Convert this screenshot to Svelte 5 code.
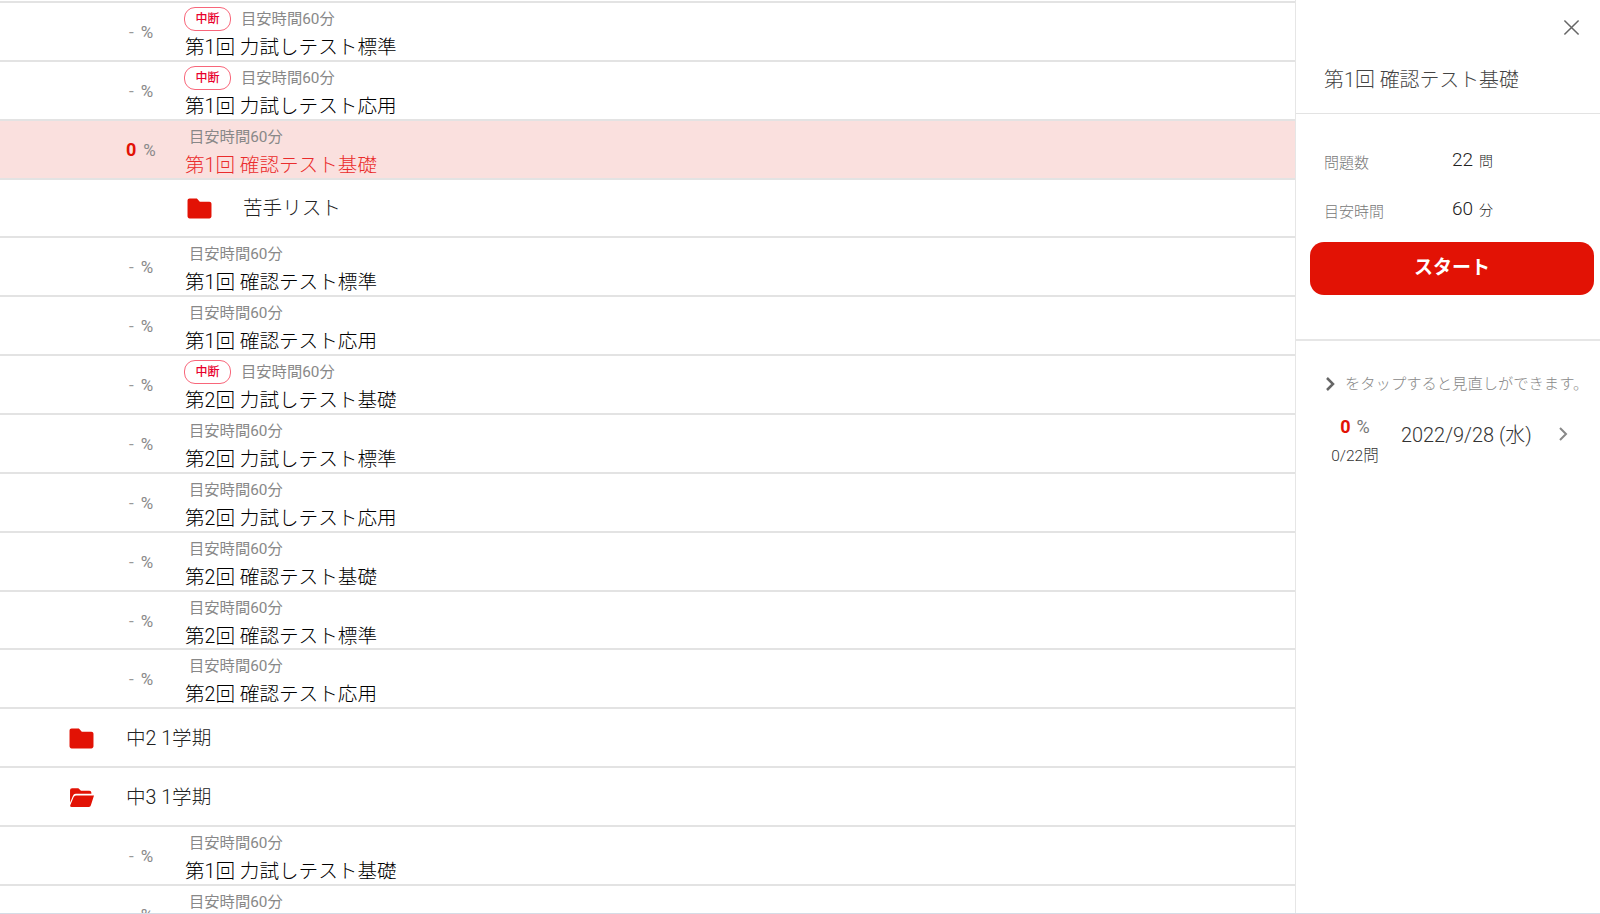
<script lang="ts">
  type Row =
    | { kind: 'test'; title: string; paused?: boolean; active?: boolean }
    | { kind: 'folder'; title: string; level: 1 | 2; open?: boolean };

  const rows: Row[] = [
    { kind: 'test', title: '第1回 力試しテスト標準', paused: true },
    { kind: 'test', title: '第1回 力試しテスト応用', paused: true },
    { kind: 'test', title: '第1回 確認テスト基礎', active: true },
    { kind: 'folder', title: '苦手リスト', level: 2 },
    { kind: 'test', title: '第1回 確認テスト標準' },
    { kind: 'test', title: '第1回 確認テスト応用' },
    { kind: 'test', title: '第2回 力試しテスト基礎', paused: true },
    { kind: 'test', title: '第2回 力試しテスト標準' },
    { kind: 'test', title: '第2回 力試しテスト応用' },
    { kind: 'test', title: '第2回 確認テスト基礎' },
    { kind: 'test', title: '第2回 確認テスト標準' },
    { kind: 'test', title: '第2回 確認テスト応用' },
    { kind: 'folder', title: '中2 1学期', level: 1 },
    { kind: 'folder', title: '中3 1学期', level: 1, open: true },
    { kind: 'test', title: '第1回 力試しテスト基礎' },
    { kind: 'test', title: '第1回 力試しテスト標準' }
  ];
</script>

<div class="page">
  <main class="list">
    {#each rows as row}
      {#if row.kind === 'test'}
        <div class="row test" class:active={row.active}>
          <div class="score">
            {#if row.active}<b>0</b>{:else}<span class="dash">-</span>{/if}
            <span class="unit">%</span>
          </div>
          <div class="info">
            <div class="meta" class:plain={!row.paused}>
              {#if row.paused}<span class="badge">中断</span>{/if}
              <span>目安時間60分</span>
            </div>
            <div class="title">{row.title}</div>
          </div>
        </div>
      {:else}
        <div class="row folder" class:nested={row.level === 2}>
          <svg class="folder-icon" viewBox="0 0 24 20" aria-hidden="true">
            {#if row.open}
              <path d="M1 3a2 2 0 0 1 2-2h6l2.500 2.500h8a2 2 0 0 1 2 2v1H6.500a3 3 0 0 0-2.800 2L1 15z" />
              <path d="M7 8h17l-3 9.500a2 2 0 0 1-2 1.500H2.500a1.300 1.300 0 0 1-1.200-1.800l3.200-7.700A2.500 2.500 0 0 1 7 8z" />
            {:else}
              <path d="M2.500.5h7l2.800 3h9.200c1.100 0 2 .9 2 2v12c0 1.100-.9 2-2 2h-19c-1.100 0-2-.9-2-2v-15c0-1.100.9-2 2-2z" />
            {/if}
          </svg>
          <span class="folder-name">{row.title}</span>
        </div>
      {/if}
    {/each}
  </main>

  <aside class="side">
    <div class="side-top">
      <button class="close" aria-label="閉じる">
        <svg viewBox="0 0 18 18"><path d="M1.500 1.500l15 15M16.500 1.500l-15 15" /></svg>
      </button>
      <h2>第1回 確認テスト基礎</h2>
    </div>
    <div class="summary">
      <dl>
        <dt>問題数</dt>
        <dd>22<small>問</small></dd>
        <dt>目安時間</dt>
        <dd>60<small>分</small></dd>
      </dl>
      <button class="start">スタート</button>
    </div>
    <div class="history">
      <p class="hint">
        <svg class="chev" viewBox="0 0 10 16"><path d="M2 2l6 6-6 6" /></svg>
        をタップすると見直しができます。
      </p>
      <div class="attempt">
        <div class="result">
          <div class="result-pct"><b>0</b><span>%</span></div>
          <div class="result-count">0/22問</div>
        </div>
        <div class="date">2022/9/28 (水)</div>
        <svg class="chev go" viewBox="0 0 10 16"><path d="M2 2l6 6-6 6" /></svg>
      </div>
    </div>
  </aside>
</div>

<style>
  :global(body) {
    margin: 0;
    background: #fff;
    overflow: hidden;
  }

  .page {
    display: flex;
    height: 914px;
    overflow: hidden;
    font-family: Roboto, "Noto Sans CJK JP", sans-serif;
    color: #212121;
    border-bottom: 1px solid #d5dce6;
    box-sizing: border-box;
  }

  .list {
    width: 1295px;
    flex: none;
    padding-top: 1px;
    box-sizing: border-box;
    overflow: hidden;
  }

  .row {
    height: 58.87px;
    box-sizing: border-box;
    border-top: 2px solid #e3e3e3;
    display: flex;
    align-items: center;
  }

  .test {
    padding-left: 129px;
  }

  .test.active {
    padding-left: 126px;
    background: #fae0de;
  }

  .score {
    width: 56px;
    flex: none;
    font-size: 17px;
    color: #8a8a8a;
    display: flex;
    gap: 7px;
    align-items: baseline;
    margin-top: 1px;
  }

  .active .score {
    width: 59px;
  }

  .dash {
    color: #999;
  }

  .score b {
    color: #e21205;
    font-size: 18px;
    font-weight: 700;
  }

  .info {
    display: flex;
    flex-direction: column;
    min-width: 0;
    align-self: flex-start;
    padding-top: 4px;
  }

  .meta {
    display: flex;
    align-items: center;
    gap: 10px;
    font-size: 15.3px;
    line-height: 24px;
    height: 24px;
    color: #888;
  }

  .meta.plain {
    padding-left: 4px;
  }

  .badge {
    width: 47px;
    height: 24px;
    margin-left: -1px;
    box-sizing: border-box;
    border: 1px solid #f8667a;
    border-radius: 11px;
    color: #e8002d;
    font-size: 12px;
    font-weight: 500;
    line-height: 22px;
    text-align: center;
  }

  .title {
    margin-top: 2px;
    font-size: 19.6px;
    font-weight: 300;
    line-height: 29px;
    color: #000;
  }

  .active .title {
    color: #ea2c2c;
  }

  .folder {
    padding-left: 69px;
  }

  .folder.nested {
    padding-left: 187px;
  }

  .folder-icon {
    width: 25px;
    height: 21px;
    fill: #e21205;
    flex: none;
    margin-top: 1px;
  }

  .folder-name {
    margin-left: 32px;
    margin-top: -3px;
    font-size: 19.6px;
    font-weight: 300;
    color: #222;
  }

  .folder.nested .folder-name {
    margin-left: 31px;
  }

  .side {
    flex: 1;
    border-left: 1px solid #e6e6e6;
    display: flex;
    flex-direction: column;
    min-width: 0;
  }

  .side-top {
    padding: 0 0 0 28px;
    height: 114px;
    box-sizing: border-box;
    border-bottom: 1px solid #e3e3e3;
    position: relative;
  }

  h2 {
    margin: 0;
    padding-top: 66px;
    font-size: 19.9px;
    line-height: 30px;
    font-weight: 300;
    color: #444;
  }

  .close {
    position: absolute;
    top: 19px;
    right: 20px;
    width: 17px;
    height: 17px;
    padding: 0;
    border: 0;
    background: none;
  }

  .close svg {
    display: block;
    fill: none;
    stroke: #666;
    stroke-width: 1.600;
  }

  .summary {
    padding: 21px 6px 44px 14px;
    border-bottom: 2px solid #e6e6e6;
  }

  dl {
    margin: 0;
    padding-left: 14px;
    display: grid;
    grid-template-columns: 128px 1fr;
    grid-auto-rows: 49px;
    align-items: center;
  }

  dt {
    font-size: 15px;
    font-weight: 300;
    color: #777;
    padding-top: 3px;
  }

  dd {
    margin: 0;
    font-size: 19px;
    font-weight: 300;
    color: #222;
  }

  dd small {
    font-size: 14px;
    margin-left: 6px;
  }

  .start {
    display: block;
    width: 284px;
    height: 53px;
    margin-top: 9px;
    padding: 0 0 6px;
    border: 0;
    border-radius: 14px;
    background: #e21205;
    color: #fff;
    font: 700 19px Roboto, "Noto Sans CJK JP", sans-serif;
  }

  .history {
    padding: 0 0 0 29px;
  }

  .hint {
    margin: 32px 0 0;
    display: flex;
    align-items: center;
    gap: 10px;
    font-size: 15.3px;
    font-weight: 300;
    line-height: 22px;
    color: #888;
    white-space: nowrap;
  }

  .chev {
    fill: none;
    stroke: #666;
    stroke-width: 2.500;
    width: 10px;
    height: 16px;
    flex: none;
  }

  .attempt {
    display: flex;
    align-items: center;
    margin-top: 21px;
  }

  .result {
    width: 60px;
    text-align: center;
  }

  .result-pct {
    display: flex;
    justify-content: center;
    align-items: baseline;
    gap: 6px;
    font-size: 18px;
    color: #777;
  }

  .result-pct b {
    color: #e21205;
    font-size: 18px;
  }

  .result-count {
    font-size: 15.500px;
    font-weight: 300;
    color: #333;
    margin-top: 6px;
  }

  .date {
    margin-left: 16px;
    margin-top: -14px;
    font-size: 19.9px;
    font-weight: 300;
    color: #333;
  }

  .go {
    margin-left: 26px;
    margin-top: -13px;
    stroke: #888;
    stroke-width: 2;
  }
</style>
